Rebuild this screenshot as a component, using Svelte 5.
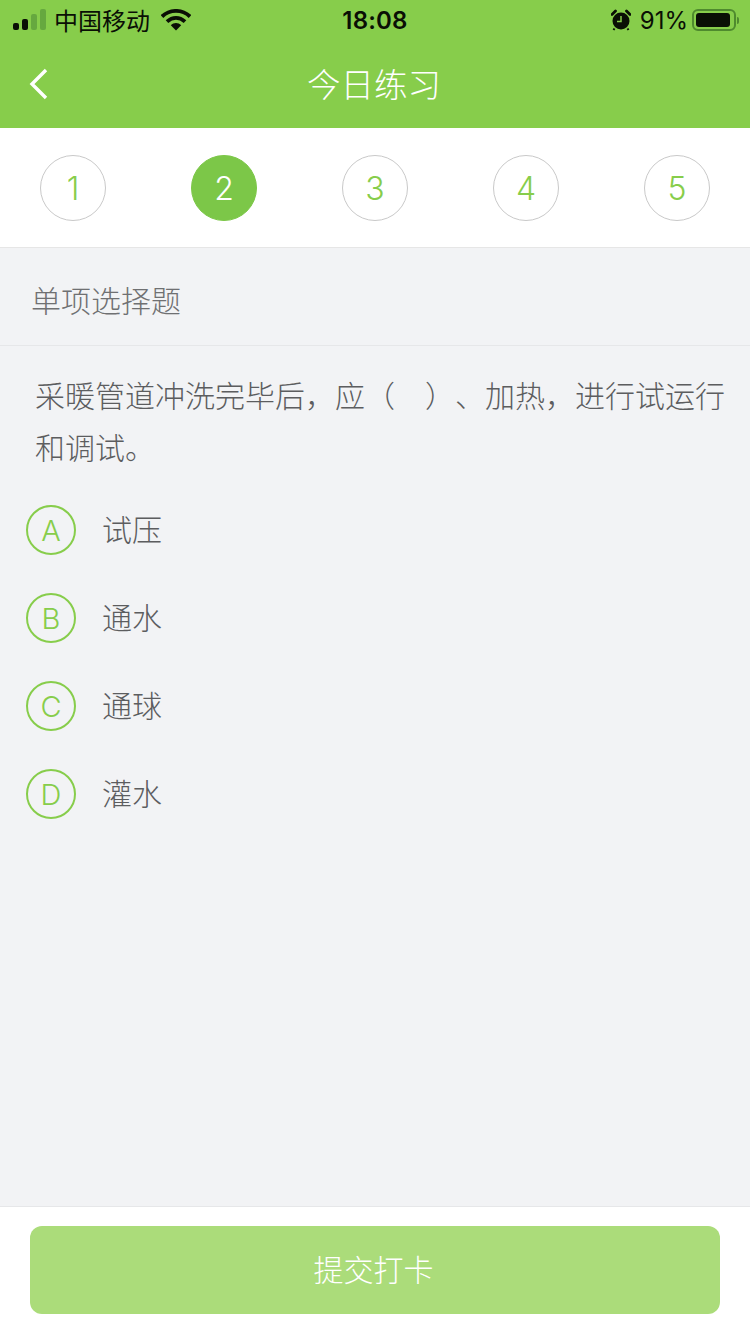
<script>
  const steps = [1, 2, 3, 4, 5];
  const current = 2;
  const options = [
    { key: 'A', text: '试压' },
    { key: 'B', text: '通水' },
    { key: 'C', text: '通球' },
    { key: 'D', text: '灌水' }
  ];
</script>

<div class="page">
  <header class="top">
    <div class="status">
      <div class="status-left">
        <svg class="signal" width="34" height="22" viewBox="0 0 34 22">
          <rect x="0" y="14" width="6" height="7" rx="2" fill="#0a0f05" />
          <rect x="9" y="10" width="6" height="11" rx="2" fill="#0a0f05" />
          <rect x="18" y="5" width="6" height="16" rx="2" fill="#66a83f" />
          <rect x="27" y="0" width="6" height="21" rx="2" fill="#66a83f" />
        </svg>
        <span class="carrier">中国移动</span>
        <svg class="wifi" width="30" height="22" viewBox="0 0 30 22">
          <path d="M1 7.500C9 0 21 0 29 7.500" fill="none" stroke="#0a0f05" stroke-width="3.800" />
          <path d="M6 12.600C11.500 7.600 18.500 7.600 24 12.600" fill="none" stroke="#0a0f05" stroke-width="3.800" />
          <path d="M9.800 16.200C12.800 13.400 17.200 13.400 20.200 16.200L15 21.500Z" fill="#0a0f05" />
        </svg>
      </div>
      <span class="clock">18:08</span>
      <div class="status-right">
        <svg class="alarm" width="20" height="22" viewBox="0 0 20 22">
          <circle cx="10" cy="12" r="8.500" fill="#0a0f05" />
          <path d="M1 5.500 4.500 2M19 5.500 15.500 2" stroke="#0a0f05" stroke-width="2.800" stroke-linecap="round" />
          <path d="M3.500 19.500 2.500 21M16.500 19.500 17.500 21" stroke="#0a0f05" stroke-width="2" />
          <path d="M10 7v5.500H6" fill="none" stroke="#87cd4b" stroke-width="1.500" />
        </svg>
        <span class="percent">91%</span>
        <div class="battery"><div class="level"></div></div>
        <div class="nub"></div>
      </div>
    </div>
    <div class="nav">
      <svg class="back" width="20" height="32" viewBox="0 0 20 32">
        <path d="M17 2 3 16l14 14" fill="none" stroke="#fff" stroke-width="3.400" />
      </svg>
      <h1>今日练习</h1>
    </div>
  </header>

  <div class="steps">
    {#each steps as n}
      <div class="step" class:active={n === current}>{n}</div>
    {/each}
  </div>

  <div class="kind">单项选择题</div>

  <main class="body">
    <p class="question">采暖管道冲洗完毕后，应（　）、加热，进行试运行和调试。</p>
    <ul class="options">
      {#each options as o}
        <li>
          <span class="badge">{o.key}</span>
          <span class="label">{o.text}</span>
        </li>
      {/each}
    </ul>
  </main>

  <footer class="bottom">
    <button class="submit">提交打卡</button>
  </footer>
</div>

<style>
  :global(body) {
    margin: 0;
  }
  .page {
    display: flex;
    flex-direction: column;
    height: 1334px;
    background: #f2f3f5;
    font-family: Inter, "Noto Sans CJK SC", sans-serif;
    text-spacing-trim: space-all;
    overflow: hidden;
  }
  .top {
    background: #87cd4b;
    height: 128px;
    flex: none;
  }
  .status {
    display: flex;
    justify-content: space-between;
    align-items: center;
    height: 40px;
    position: relative;
    padding: 0 11px 0 13px;
    color: #0a0f05;
  }
  .status-left,
  .status-right {
    display: flex;
    align-items: center;
  }
  .carrier {
    font-size: 24px;
    margin-left: 7px;
    padding-bottom: 2px;
  }
  .wifi {
    margin-left: 11px;
  }
  .clock {
    position: absolute;
    left: 0;
    right: 0;
    text-align: center;
    font-size: 24px;
    font-weight: 600;
    letter-spacing: 0.2px;
  }
  .percent {
    font-size: 24px;
    margin-left: 9px;
  }
  .battery {
    width: 44px;
    height: 22px;
    box-sizing: border-box;
    margin-left: 4px;
    border: 2px solid #4f8a2e;
    border-radius: 6px;
    padding: 2px;
  }
  .level {
    width: 34px;
    height: 100%;
    background: #0a0f05;
    border-radius: 3px;
  }
  .nub {
    width: 2px;
    height: 7px;
    margin-left: 1px;
    background: #4f8a2e;
    border-radius: 0 2px 2px 0;
  }
  .nav {
    display: flex;
    align-items: center;
    justify-content: center;
    height: 88px;
    position: relative;
  }
  .back {
    position: absolute;
    left: 29px;
    top: 28px;
  }
  h1 {
    margin: 0;
    padding: 0 2px 4px 0;
    color: #fff;
    font-size: 33.500px;
    font-weight: 300;
  }
  .steps {
    display: flex;
    justify-content: space-between;
    align-items: center;
    flex: none;
    height: 120px;
    padding: 0 40px;
    box-sizing: border-box;
    background: #fff;
    border-bottom: 1px solid #e6e6e6;
  }
  .step {
    display: flex;
    align-items: center;
    justify-content: center;
    width: 66px;
    height: 66px;
    box-sizing: border-box;
    padding-top: 2px;
    border: 1px solid #c9c9c9;
    border-radius: 50%;
    color: #87cd4b;
    font-size: 32px;
    font-weight: 350;
  }
  .step.active {
    background: #7cc748;
    border-color: #7cc748;
    color: #fff;
  }
  .kind {
    flex: none;
    height: 97px;
    line-height: 106px;
    padding-left: 31px;
    border-bottom: 1px solid #e6e7e9;
    color: #6f7072;
    font-size: 30px;
    font-weight: 300;
  }
  .body {
    flex: 1;
  }
  .question {
    margin: 24px 20px 0 35px;
    color: #5c5d5f;
    font-size: 30px;
    font-weight: 300;
    line-height: 52px;
  }
  .options {
    list-style: none;
    margin: 12px 0 0;
    padding: 0 0 0 26px;
  }
  .options li {
    display: flex;
    align-items: center;
    height: 88px;
  }
  .badge {
    display: flex;
    align-items: center;
    justify-content: center;
    width: 50px;
    height: 50px;
    box-sizing: border-box;
    border: 2px solid #87cd4b;
    border-radius: 50%;
    color: #87cd4b;
    font-size: 29px;
    font-weight: 350;
  }
  .label {
    margin-left: 26px;
    padding-bottom: 4px;
    color: #5c5d5f;
    font-size: 30px;
    font-weight: 300;
  }
  .bottom {
    flex: none;
    height: 128px;
    box-sizing: border-box;
    padding: 19px 30px 0;
    background: #fff;
    border-top: 1px solid #e6e7e9;
  }
  .submit {
    display: block;
    width: 100%;
    height: 88px;
    padding: 0 3px 4px 0;
    border: 0;
    border-radius: 12px;
    background: #abdc7a;
    color: #fff;
    font-family: inherit;
    font-size: 30px;
    font-weight: 300;
  }
</style>
